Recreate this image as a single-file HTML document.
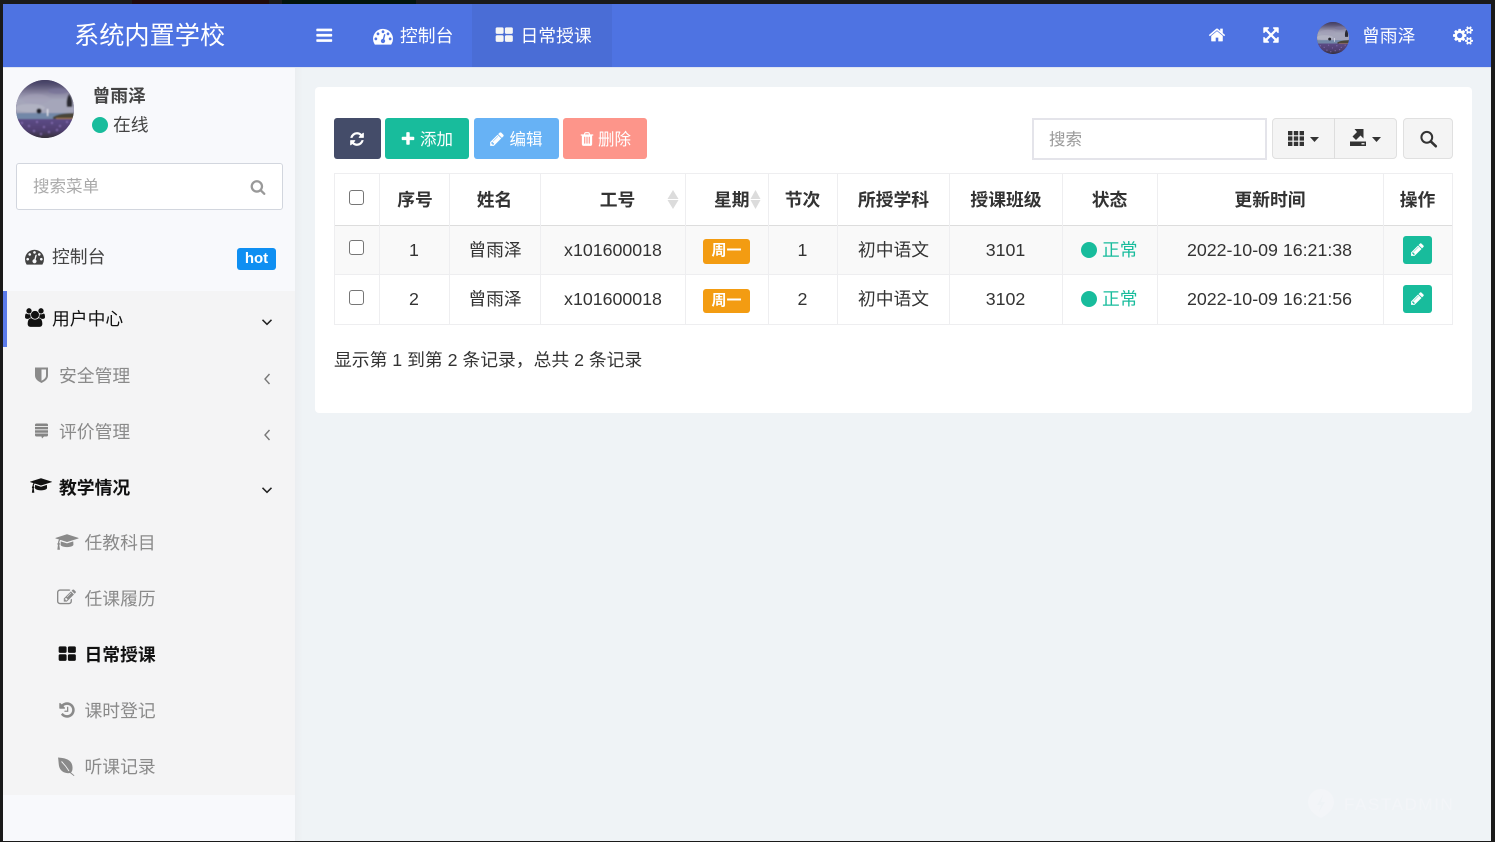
<!DOCTYPE html>
<html lang="zh"><head><meta charset="utf-8"><title>日常授课</title>
<style>
*{box-sizing:border-box}
html,body{margin:0;padding:0;width:1495px;height:842px;overflow:hidden;background:#1a1a1a;font-family:"Liberation Sans","Noto Sans CJK SC",sans-serif;font-size:17.8px;color:#333}
.b{position:absolute}
.t{position:absolute;white-space:nowrap;line-height:24px;height:24px;margin-top:1px}
.c{text-align:center}
svg.i{position:absolute;fill:currentColor;overflow:visible}
.th{font-weight:700;color:#333}
.ln{position:absolute;background:#eeeef0}
.v{top:173px;width:1px;height:152px}
.cb{position:absolute;left:349px;width:15px;height:15px;border:1.5px solid #767676;border-radius:3px;background:#fff}
.bd{position:absolute;left:703px;width:47px;background:#f39c12;border-radius:3px;color:#fff;font-weight:700;font-size:15px;text-align:center;line-height:24px}
.dot{position:absolute;border-radius:50%;background:#18bc9c;width:16px;height:16px}
.eb{position:absolute;left:1403px;width:29px;height:28px;background:#18bc9c;border-radius:3px}
.btn{position:absolute;top:118px;height:41px;border-radius:3px}
.sub{color:#8a8a8a}
</style></head><body>
<svg width="0" height="0" style="position:absolute">
<defs>
<linearGradient id="sky" x1="0" y1="0" x2="0" y2="1"><stop offset="0" stop-color="#38345a"/><stop offset=".2" stop-color="#585374"/><stop offset=".42" stop-color="#8d8aa4"/><stop offset=".58" stop-color="#a5a6ba"/></linearGradient>
<linearGradient id="fld" x1="0" y1="0" x2="0" y2="1"><stop offset="0" stop-color="#5c4a86"/><stop offset=".55" stop-color="#4f3f70"/><stop offset="1" stop-color="#2e2c28"/></linearGradient>
<clipPath id="avc"><circle cx="29" cy="29" r="29"/></clipPath>
<filter id="soft" x="-5%" y="-5%" width="110%" height="110%"><feGaussianBlur stdDeviation=".7"/></filter>
<symbol id="avatar" viewBox="0 0 58 58"><g clip-path="url(#avc)"><rect width="58" height="58" fill="#4f3f70"/><g filter="url(#soft)">
<rect x="-2" y="-2" width="62" height="38" fill="url(#sky)"/>
<ellipse cx="20" cy="19" rx="14" ry="5" fill="#a4a1b8" opacity=".55"/>
<ellipse cx="42" cy="11" rx="10" ry="3" fill="#77739a" opacity=".7"/>
<ellipse cx="14" cy="28" rx="15" ry="4" fill="#b7b8c6" opacity=".7"/>
<rect x="-2" y="33" width="62" height="7" fill="#7288a8"/>
<path d="M37 37c5-3 12-4 23-4v6H37z" fill="#4a4538"/>
<path d="M40 38h20v1.500H40z" fill="#a87a4a"/>
<rect x="31" y="29" width="1.200" height="7" fill="#e8e8f0"/>
<circle cx="23" cy="31" r="2.600" fill="#23222c"/>
<path d="M53 14c3 3 4 8 3 13h-5c-1-5 0-10 2-13z" fill="#2a2a30"/>
<rect x="-2" y="39" width="62" height="21" fill="url(#fld)"/>
<g fill="#8a72b8" opacity=".8"><circle cx="6" cy="43" r="1.100"/><circle cx="13" cy="46" r="1.100"/><circle cx="21" cy="42" r="1.100"/><circle cx="28" cy="47" r="1.100"/><circle cx="36" cy="43" r="1.100"/><circle cx="44" cy="46" r="1.100"/><circle cx="51" cy="42" r="1.100"/><circle cx="18" cy="51" r="1.100"/><circle cx="33" cy="52" r="1.100"/><circle cx="41" cy="50" r="1.100"/><circle cx="25" cy="54" r="1.100"/></g>
</g></g></symbol>
<symbol id="bars" viewBox="0 0 1792 1792"><path d="M1664 1344v128q0 26-19 45t-45 19h-1408q-26 0-45-19t-19-45v-128q0-26 19-45t45-19h1408q26 0 45 19t19 45zm0-512v128q0 26-19 45t-45 19h-1408q-26 0-45-19t-19-45v-128q0-26 19-45t45-19h1408q26 0 45 19t19 45zm0-512v128q0 26-19 45t-45 19h-1408q-26 0-45-19t-19-45v-128q0-26 19-45t45-19h1408q26 0 45 19t19 45z"/></symbol>
<symbol id="home" viewBox="0 0 1792 1792"><path d="M1472 992v480q0 26-19 45t-45 19h-384v-384h-256v384h-384q-26 0-45-19t-19-45v-480q0-1 .5-3t.5-3l575-474 575 474q1 2 1 6zm223-69l-62 74q-8 9-21 11h-3q-13 0-21-7l-692-577-692 577q-12 8-24 7-13-2-21-11l-62-74q-8-10-7-23.5t11-21.5l719-599q32-26 76-26t76 26l244 204v-195q0-14 9-23t23-9h192q14 0 23 9t9 23v408l219 182q10 8 11 21.5t-7 23.5z"/></symbol>
<symbol id="pencil" viewBox="0 0 1792 1792"><path d="M491 1536l91-91-235-235-91 91v107h128v128h107zm523-928q0-22-22-22-10 0-17 7l-542 542q-7 7-7 17 0 22 22 22 10 0 17-7l542-542q7-7 7-17zm-54-192l416 416-832 832h-416v-416zm683 96q0 53-37 90l-166 166-416-416 166-165q36-38 90-38 53 0 91 38l235 234q37 39 37 91z"/></symbol>
<symbol id="plus" viewBox="0 0 1792 1792"><path d="M1600 736v192q0 40-28 68t-68 28h-416v416q0 40-28 68t-68 28h-192q-40 0-68-28t-28-68v-416h-416q-40 0-68-28t-28-68v-192q0-40 28-68t68-28h416v-416q0-40 28-68t68-28h192q40 0 68 28t28 68v416h416q40 0 68 28t28 68z"/></symbol>
<symbol id="search" viewBox="0 0 1792 1792"><path d="M1216 832q0-185-131.500-316.500t-316.500-131.500-316.500 131.500-131.500 316.500 131.500 316.500 316.500 131.500 316.500-131.500 131.500-316.500zm512 832q0 52-38 90t-90 38q-54 0-90-38l-343-342q-179 124-399 124-143 0-273.500-55.500t-225-150-150-225-55.500-273.500 55.500-273.500 150-225 225-150 273.500-55.500 273.500 55.500 225 150 150 225 55.500 273.500q0 220-124 399l343 343q37 37 37 90z"/></symbol>
<symbol id="refresh" viewBox="0 0 1792 1792"><path d="M1639 1056q0 5-1 7-64 268-268 434.500t-478 166.500q-146 0-282.500-55t-243.500-157l-129 129q-19 19-45 19t-45-19-19-45v-448q0-26 19-45t45-19h448q26 0 45 19t19 45-19 45l-137 137q71 66 161 102t187 36q134 0 250-65t186-179q11-17 53-117 8-23 30-23h192q13 0 22.500 9.500t9.500 22.500zm25-800v448q0 26-19 45t-45 19h-448q-26 0-45-19t-19-45 19-45l138-138q-148-137-349-137-134 0-250 65t-186 179q-11 17-53 117-8 23-30 23h-199q-13 0-22.500-9.500t-9.500-22.500v-7q65-268 270-434.500t480-166.500q146 0 284 55.500t245 156.500l130-129q19-19 45-19t45 19 19 45z"/></symbol>
<symbol id="trash" viewBox="0 0 1792 1792"><path d="M704 1376v-704q0-14-9-23t-23-9h-64q-14 0-23 9t-9 23v704q0 14 9 23t23 9h64q14 0 23-9t9-23zm256 0v-704q0-14-9-23t-23-9h-64q-14 0-23 9t-9 23v704q0 14 9 23t23 9h64q14 0 23-9t9-23zm256 0v-704q0-14-9-23t-23-9h-64q-14 0-23 9t-9 23v704q0 14 9 23t23 9h64q14 0 23-9t9-23zm-544-992h448l-48-117q-7-9-17-11h-317q-10 2-17 11zm928 32v64q0 14-9 23t-23 9h-96v948q0 83-47 143.500t-113 60.500h-832q-66 0-113-58.500t-47-141.500v-952h-96q-14 0-23-9t-9-23v-64q0-14 9-23t23-9h309l70-167q15-37 54-63t79-26h320q40 0 79 26t54 63l70 167h309q14 0 23 9t9 23z"/></symbol>
<symbol id="dash" viewBox="0 0 1792 1792"><path fill-rule="evenodd" d="M384 1152q0-53-37.500-90.500t-90.500-37.500-90.500 37.500-37.500 90.500 37.500 90.500 90.500 37.500 90.500-37.500 37.500-90.500zm192-448q0-53-37.500-90.500t-90.500-37.500-90.500 37.500-37.500 90.500 37.500 90.500 90.500 37.500 90.500-37.500 37.500-90.500zm428 481l101-382q6-26-7.500-48.500t-38.500-29.500-48 6.500-30 39.500l-101 382q-60 5-107 43.500t-63 98.500q-20 77 20 146t117 89 146-20 89-117q16-60-6-117t-72-91zm660-33q0-53-37.500-90.500t-90.500-37.500-90.500 37.500-37.500 90.500 37.500 90.500 90.500 37.500 90.500-37.500 37.500-90.500zm-640-640q0-53-37.500-90.500t-90.500-37.500-90.500 37.500-37.500 90.500 37.500 90.500 90.500 37.500 90.500-37.500 37.500-90.500zm448 192q0-53-37.500-90.500t-90.500-37.500-90.500 37.500-37.500 90.500 37.500 90.500 90.500 37.500 90.500-37.500 37.500-90.500zm320 448q0 261-141 483-19 29-54 29h-1402q-35 0-54-29-141-221-141-483 0-182 71-348t191-286 286-191 348-71 348 71 286 191 191 286 71 348z"/></symbol>
<symbol id="users" viewBox="0 0 1920 1792"><path d="M593 896q-162 5-265 128h-134q-82 0-138-40.500t-56-118.500q0-353 124-353 6 0 43.500 21t97.500 42.500 119 21.500q67 0 133-23-5 37-5 66 0 139 81 256zm1071 637q0 120-73 189.500t-194 69.500h-874q-121 0-194-69.500t-73-189.500q0-53 3.500-103.500t14-109 26.500-108.500 43-97.500 62-81 85.500-53.500 111.500-20q10 0 43 21.500t73 48 107 48 135 21.500 135-21.500 107-48 73-48 43-21.500q61 0 111.500 20t85.500 53.500 62 81 43 97.500 26.500 108.500 14 109 3.500 103.500zm-1024-1277q0 106-75 181t-181 75-181-75-75-181 75-181 181-75 181 75 75 181zm704 384q0 159-112.500 271.500t-271.500 112.500-271.500-112.500-112.500-271.500 112.500-271.500 271.500-112.500 271.500 112.500 112.500 271.500zm576 225q0 78-56 118.500t-138 40.500h-134q-103-123-265-128 81-117 81-256 0-29-5-66 66 23 133 23 59 0 119-21.500t97.500-42.500 43.500-21q124 0 124 353zm-128-609q0 106-75 181t-181 75-181-75-75-181 75-181 181-75 181 75 75 181z"/></symbol>
<symbol id="cap" viewBox="0 0 2304 1792"><path d="M1774 836l18 316q4 69-82 128t-235 93.500-323 34.500-323-34.500-235-93.500-82-128l18-316 574 181q22 7 48 7t48-7zm530-324q0 23-22 31l-1120 352q-4 1-10 1t-10-1l-652-206q-43 34-71 111.500t-34 178.500q63 36 63 109 0 69-58 107l58 433q2 14-8 25-9 11-24 11h-192q-15 0-24-11-10-11-8-25l58-433q-58-38-58-107 0-73 65-111 11-207 98-330l-333-104q-22-8-22-31t22-31l1120-352q4-1 10-1t10 1l1120 352q22 8 22 31z"/></symbol>
<symbol id="expand" viewBox="0 0 1792 1792"><path d="M1411 541l-355 355 355 355 144-144q29-31 70-14 39 17 39 59v448q0 26-19 45t-45 19h-448q-42 0-59-40-17-39 14-69l144-144-355-355-355 355 144 144q31 30 14 69-17 40-59 40h-448q-26 0-45-19t-19-45v-448q0-42 40-59 39-17 69 14l144 144 355-355-355-355-144 144q-19 19-45 19-12 0-24-5-40-17-40-59v-448q0-26 19-45t45-19h448q42 0 59 40 17 39-14 69l-144 144 355 355 355-355-144-144q-31-30-14-69 17-40 59-40h448q26 0 45 19t19 45v448q0 42-39 59-13 5-25 5-26 0-45-19z"/></symbol>
<symbol id="edit" viewBox="0 0 1792 1792"><path d="M888 1184l116-116-152-152-116 116v56h96v96h56zm440-720q-16-16-33 1l-350 350q-17 17-1 33t33-1l350-350q17-17 1-33zm80 594v190q0 119-84.500 203.500t-203.500 84.500h-832q-119 0-203.500-84.500t-84.500-203.500v-832q0-119 84.500-203.500t203.500-84.500h832q63 0 117 25 15 7 18 23 3 17-9 29l-49 49q-14 14-32 8-23-6-45-6h-832q-66 0-113 47t-47 113v832q0 66 47 113t113 47h832q66 0 113-47t47-113v-126q0-13 9-22l64-64q15-15 35-7t20 29zm-96-738l288 288-672 672h-288v-288zm444 132l-92 92-288-288 92-92q27-27 68-27t68 27l152 152q27 27 27 68t-27 68z"/></symbol>
<symbol id="history" viewBox="0 0 1792 1792"><path d="M1664 896q0 156-61 298t-164 245-245 164-298 61q-172 0-327-72.500t-264-204.500q-7-10-6.500-22.500t8.500-20.500l137-138q10-9 25-9 16 2 23 12 73 95 179 147t225 52q104 0 198.500-40.500t163.500-109.500 109.500-163.500 40.500-198.500-40.500-198.500-109.500-163.500-163.500-109.500-198.500-40.500q-98 0-188 35.500t-160 101.500l137 138q31 30 14 69-17 40-59 40h-448q-26 0-45-19t-19-45v-448q0-42 40-59 39-17 69 14l130 129q107-101 244.500-156.500t284.500-55.500q156 0 298 61t245 164 164 245 61 298zm-640-288v448q0 14-9 23t-23 9h-320q-14 0-23-9t-9-23v-64q0-14 9-23t23-9h224v-352q0-14 9-23t23-9h64q14 0 23 9t9 23z"/></symbol>
<symbol id="cogs" viewBox="0 0 1920 1792"><path d="M896 896q0-106-75-181t-181-75-181 75-75 181 75 181 181 75 181-75 75-181zm768 512q0-52-38-90t-90-38-90 38-38 90q0 53 37.500 90.500t90.500 37.500 90.500-37.500 37.500-90.500zm0-1024q0-52-38-90t-90-38-90 38-38 90q0 53 37.500 90.500t90.500 37.500 90.500-37.500 37.500-90.500zm-384 421v185q0 10-7 19.500t-16 10.500l-155 24q-11 35-32 76 34 48 90 115 7 11 7 20 0 12-7 19-23 30-82.500 89.500t-78.500 59.500q-11 0-21-7l-115-90q-37 19-77 31-11 108-23 155-7 24-30 24h-186q-11 0-20-7.500t-10-17.500l-23-153q-34-10-75-31l-118 89q-7 7-20 7-11 0-21-8-144-133-144-160 0-9 7-19 10-14 41-53t47-61q-23-44-35-82l-152-24q-10-1-17-9.500t-7-19.500v-185q0-10 7-19.500t16-10.500l155-24q11-35 32-76-34-48-90-115-7-11-7-20 0-12 7-20 22-30 82-89t79-59q11 0 21 7l115 90q34-18 77-32 11-108 23-154 7-24 30-24h186q11 0 20 7.500t10 17.500l23 153q34 10 75 31l118-89q8-7 20-7 11 0 21 8 144 133 144 160 0 8-7 19-12 16-42 54t-45 60q23 48 34 82l152 23q10 2 17 10.500t7 19.500zm640 533v140q0 16-149 31-12 27-30 52 51 113 51 138 0 4-4 7-122 71-124 71-8 0-46-47t-52-68q-20 2-30 2t-30-2q-14 21-52 68t-46 47q-2 0-124-71-4-3-4-7 0-25 51-138-18-25-30-52-149-15-149-31v-140q0-16 149-31 13-29 30-52-51-113-51-138 0-4 4-7 4-2 35-20t59-34 30-16q8 0 46 46.500t52 67.500q20-2 30-2t30 2q51-71 92-112l6-2q4 0 124 70 4 3 4 7 0 25-51 138 17 23 30 52 149 15 149 31zm0-1024v140q0 16-149 31-12 27-30 52 51 113 51 138 0 4-4 7-122 71-124 71-8 0-46-47t-52-68q-20 2-30 2t-30-2q-14 21-52 68t-46 47q-2 0-124-71-4-3-4-7 0-25 51-138-18-25-30-52-149-15-149-31v-140q0-16 149-31 13-29 30-52-51-113-51-138 0-4 4-7 4-2 35-20t59-34 30-16q8 0 46 46.500t52 67.500q20-2 30-2t30 2q51-71 92-112l6-2q4 0 124 70 4 3 4 7 0 25-51 138 17 23 30 52 149 15 149 31z"/></symbol>
<symbol id="thl" viewBox="0 0 1792 1792"><path d="M832 1024v384q0 52-38 90t-90 38h-512q-52 0-90-38t-38-90v-384q0-52 38-90t90-38h512q52 0 90 38t38 90zm0-768v384q0 52-38 90t-90 38h-512q-52 0-90-38t-38-90v-384q0-52 38-90t90-38h512q52 0 90 38t38 90zm896 768v384q0 52-38 90t-90 38h-512q-52 0-90-38t-38-90v-384q0-52 38-90t90-38h512q52 0 90 38t38 90zm0-768v384q0 52-38 90t-90 38h-512q-52 0-90-38t-38-90v-384q0-52 38-90t90-38h512q52 0 90 38t38 90z"/></symbol>
</defs></svg>

<!-- top frame strip -->
<div class="b" style="left:132px;top:0;width:137px;height:4px;background:#1f0a0a"></div>
<div class="b" style="left:282px;top:0;width:134px;height:4px;background:#02140c"></div>

<!-- content bg -->
<div class="b" style="left:3px;top:4px;width:1488px;height:837px;background:#eff3f6"></div>
<!-- header -->
<div class="b" style="left:3px;top:4px;width:1488px;height:63px;background:#4e73e2"></div>
<div class="b" style="left:472px;top:4px;width:140px;height:63px;background:#4a6dd6"></div>
<div class="b" style="left:3px;top:67px;width:1488px;height:1px;background:#dfe5f2"></div>
<div class="t" style="left:74px;top:19px;height:32px;line-height:32px;font-size:25.200px;color:#fff">系统内置学校</div>
<svg class="i" style="left:315px;top:25.500px;color:#fff" width="18.500" height="18.500"><use href="#bars"/></svg>
<svg class="i" style="left:373px;top:26px;color:#fff" width="20" height="20"><use href="#dash"/></svg>
<div class="t" style="left:400px;top:23px;color:#fff">控制台</div>
<svg class="i" style="left:494.500px;top:26px;color:#f5f5f5" width="18.500" height="18.500"><use href="#thl"/></svg>
<div class="t" style="left:520.500px;top:23px;color:#fff">日常授课</div>
<svg class="i" style="left:1208px;top:26px;color:#fff" width="18" height="18"><use href="#home"/></svg>
<svg class="i" style="left:1262px;top:26px;color:#fff" width="18" height="18"><use href="#expand"/></svg>
<svg class="b" style="left:1317px;top:22px" width="32" height="32"><use href="#avatar"/></svg>
<div class="t" style="left:1362px;top:23px;color:#fff">曾雨泽</div>
<svg class="i" style="left:1452.500px;top:26px;color:#fff" width="20" height="19"><use href="#cogs"/></svg>

<!-- sidebar -->
<div class="b" style="left:3px;top:68px;width:292px;height:773px;background:#f8f9fc"></div>
<div class="b" style="left:3px;top:291px;width:292px;height:504px;background:#f4f4f5"></div>
<div class="b" style="left:295px;top:68px;width:8px;height:773px;background:linear-gradient(90deg,#ebeef1,#eff3f6)"></div>
<svg class="b" style="left:16px;top:80px" width="58" height="58"><use href="#avatar"/></svg>
<div class="t" style="left:92.500px;top:83px;font-weight:700;color:#444">曾雨泽</div>
<div class="dot" style="left:92px;top:117px"></div>
<div class="t" style="left:113px;top:112px;color:#444">在线</div>
<div class="b" style="left:16px;top:163px;width:267px;height:47px;background:#fff;border:1px solid #d2d6de;border-radius:3px"></div>
<div class="t" style="left:33px;top:174px;color:#aaa;font-size:16.500px">搜索菜单</div>
<svg class="i" style="left:250px;top:179px;color:#999" width="16" height="16"><use href="#search"/></svg>

<svg class="i" style="left:25px;top:247px;color:#444" width="19" height="19"><use href="#dash"/></svg>
<div class="t" style="left:52px;top:244px;color:#444">控制台</div>
<div class="b" style="left:237px;top:248px;width:39px;height:22px;background:#0f8ff2;border-radius:3px;color:#fff;font-weight:700;font-size:15px;line-height:21px;text-align:center">hot</div>

<div class="b" style="left:3px;top:291px;width:4px;height:56px;background:#5b7bea"></div>
<svg class="i" style="left:25px;top:308px;color:#111" width="20" height="19"><use href="#users"/></svg>
<div class="t" style="left:52px;top:306px;color:#111">用户中心</div>
<svg class="i" style="left:261px;top:318px;fill:none;stroke:#222;stroke-width:1.500" width="12" height="9"><path d="M1.500 1.800L6 6.300 10.500 1.800"/></svg>

<svg class="i" style="left:33px;top:366px" width="17" height="18" viewBox="0 0 17 18"><path fill="#8a8a8a" d="M2 1.500h13v8c0 3.500-3 5.800-6.500 7.500C5 15.300 2 13 2 9.500z"/><path fill="#f4f4f5" d="M8.500 3.500h4.500v6c0 2.400-2 4-4.500 5.300z"/></svg>
<div class="t sub" style="left:59px;top:362.500px">安全管理</div>
<svg class="i" style="left:263px;top:373px;fill:none;stroke:#777;stroke-width:1.400" width="9" height="12"><path d="M6.500 1L2 6 6.500 11"/></svg>

<svg class="i" style="left:33px;top:422px" width="17" height="18" viewBox="0 0 17 18"><path fill="#858585" d="M3.500 1.500h10a1.500 1.500 0 0 1 1.500 1.500v1H2V3a1.500 1.500 0 0 1 1.500-1.500zM2 4.900h13v2.500H2zM2 8.200h13v2.500H2zM2 11.500h13v1.500a1.500 1.500 0 0 1-1.500 1.500H11l-2 2-.5-2h-5A1.500 1.500 0 0 1 2 13z"/></svg>
<div class="t sub" style="left:59px;top:418.500px">评价管理</div>
<svg class="i" style="left:263px;top:429px;fill:none;stroke:#777;stroke-width:1.400" width="9" height="12"><path d="M6.500 1L2 6 6.500 11"/></svg>

<svg class="i" style="left:30px;top:477px;color:#111" width="22" height="17"><use href="#cap"/></svg>
<div class="t" style="left:59px;top:474.500px;font-weight:700;color:#111">教学情况</div>
<svg class="i" style="left:261px;top:486px;fill:none;stroke:#222;stroke-width:1.500" width="12" height="9"><path d="M1.500 1.800L6 6.300 10.500 1.800"/></svg>

<svg class="i" style="left:55px;top:533px;color:#8a8a8a" width="24" height="18"><use href="#cap"/></svg>
<div class="t sub" style="left:84.500px;top:530px">任教科目</div>
<svg class="i" style="left:57px;top:588px;color:#8a8a8a" width="19" height="19"><use href="#edit"/></svg>
<div class="t sub" style="left:84.500px;top:586px">任课履历</div>
<svg class="i" style="left:57.500px;top:645px;color:#111" width="18.500" height="18.500"><use href="#thl"/></svg>
<div class="t" style="left:84.500px;top:642px;font-weight:700;color:#111">日常授课</div>
<svg class="i" style="left:57.500px;top:701px;color:#8a8a8a" width="18" height="18"><use href="#history"/></svg>
<div class="t sub" style="left:84.500px;top:698px">课时登记</div>
<svg class="i" style="left:57px;top:756.500px" width="19" height="19" viewBox="0 0 19 19"><path fill="#8a8a8a" d="M1 .5C9 1 15 3 15.500 10c.2 3-.5 4.500-1.500 5.500l3.500 3-.7.500-3.800-3C8 17 3 14 2 9 1.500 6 1.500 3 1 .5z"/><path fill="none" stroke="#f4f4f5" stroke-width=".9" d="M4.500 4.500C7 7 9.500 10 12 14"/></svg>
<div class="t sub" style="left:84.500px;top:754px">听课记录</div>

<!-- panel -->
<div class="b" style="left:315px;top:87px;width:1157px;height:326px;background:#fff;border-radius:4px"></div>
<div class="btn" style="left:334px;width:47px;background:#444c69"></div>
<svg class="i" style="left:349px;top:131px;color:#fff" width="16" height="16"><use href="#refresh"/></svg>
<div class="btn" style="left:385px;width:84px;background:#18bc9c"></div>
<svg class="i" style="left:400px;top:130.500px;color:#fff" width="16" height="16"><use href="#plus"/></svg>
<div class="t" style="left:420px;top:127px;color:#fff;font-size:16.500px">添加</div>
<div class="btn" style="left:474px;width:85px;background:#67b2f5"></div>
<svg class="i" style="left:489px;top:131px;color:#fff" width="16" height="16"><use href="#pencil"/></svg>
<div class="t" style="left:509.500px;top:127px;color:#fff;font-size:16.500px">编辑</div>
<div class="btn" style="left:563px;width:84px;background:#fd958a"></div>
<svg class="i" style="left:579px;top:131px;color:#fff" width="16" height="16"><use href="#trash"/></svg>
<div class="t" style="left:598px;top:127px;color:#fff;font-size:16.500px">删除</div>

<div class="b" style="left:1032px;top:118px;width:235px;height:42px;background:#fff;border:2px solid #e4e4ea"></div>
<div class="t" style="left:1049px;top:127px;color:#999;font-size:16.500px">搜索</div>
<div class="b" style="left:1272px;top:118px;width:125px;height:41px;background:#f4f4f4;border:1px solid #e0e0e0;border-radius:4px"></div>
<div class="b" style="left:1334px;top:118px;width:1px;height:41px;background:#ddd"></div>
<svg class="i" style="left:1288px;top:131px" width="16" height="15" viewBox="0 0 16 15"><path fill="#333" d="M0 0h4.400v4.200H0zM5.800 0h4.400v4.200H5.800zM11.600 0H16v4.200h-4.400zM0 5.400h4.400v4.200H0zM5.800 5.400h4.400v4.200H5.800zM11.600 5.400H16v4.200h-4.400zM0 10.800h4.400V15H0zM5.800 10.800h4.400V15H5.800zM11.600 10.800H16V15h-4.400z"/></svg>
<svg class="i" style="left:1310px;top:137px" width="9" height="5"><path fill="#333" d="M0 0h9L4.500 5z"/></svg>
<svg class="i" style="left:1350px;top:129px" width="16" height="17" viewBox="0 0 16 17"><path fill="#333" d="M4.500 0h9v9.500l-3-3L6 11 2.500 7.500l4.500-4.500zM0 12.500h16V17H0z"/><path fill="#ddd" d="M11.500 14h3v1.500h-3z"/></svg>
<svg class="i" style="left:1372px;top:137px" width="9" height="5"><path fill="#333" d="M0 0h9L4.500 5z"/></svg>
<div class="b" style="left:1403px;top:118px;width:50px;height:41px;background:#f4f4f4;border:1px solid #e0e0e0;border-radius:4px"></div>
<svg class="i" style="left:1419.500px;top:130.500px;fill:none;stroke:#333" width="17" height="16" viewBox="0 0 17 16"><circle cx="6.800" cy="6.300" r="5.400" stroke-width="2"/><path d="M10.800 10.400l5 4.800" stroke-width="2.600" stroke-linecap="round"/></svg>

<!-- table -->
<div class="b" style="left:334px;top:226px;width:1118px;height:48px;background:#f9f9f9"></div>
<div class="ln" style="left:334px;top:173px;width:1119px;height:1px"></div>
<div class="b" style="left:334px;top:225px;width:1119px;height:1px;background:#ddd"></div>
<div class="ln" style="left:334px;top:274px;width:1119px;height:1px"></div>
<div class="ln" style="left:334px;top:324px;width:1119px;height:1px"></div>
<div class="ln v" style="left:334px"></div>
<div class="ln v" style="left:379px"></div>
<div class="ln v" style="left:449px"></div>
<div class="ln v" style="left:540px"></div>
<div class="ln v" style="left:685px"></div>
<div class="ln v" style="left:768px"></div>
<div class="ln v" style="left:837px"></div>
<div class="ln v" style="left:949px"></div>
<div class="ln v" style="left:1062px"></div>
<div class="ln v" style="left:1157px"></div>
<div class="ln v" style="left:1383px"></div>
<div class="ln v" style="left:1452px"></div>

<div class="cb" style="top:190px"></div>
<div class="t c th" style="left:380px;width:70px;top:187px">序号</div>
<div class="t c th" style="left:449px;width:91px;top:187px">姓名</div>
<div class="t c th" style="left:540px;width:155px;top:187px">工号</div>
<svg class="i" style="left:666.500px;top:190px" width="12" height="19"><path fill="#dcdcdc" d="M6 0l5.500 9H.5zM.5 10h11L6 19z"/></svg>
<div class="t th" style="left:714px;top:187px">星期</div>
<svg class="i" style="left:750px;top:190px" width="11" height="19"><path fill="#dcdcdc" d="M5.500 0l5 9H.5zM.5 10h10l-5 9z"/></svg>
<div class="t c th" style="left:768px;width:69px;top:187px">节次</div>
<div class="t c th" style="left:838px;width:111px;top:187px">所授学科</div>
<div class="t c th" style="left:950px;width:112px;top:187px">授课班级</div>
<div class="t c th" style="left:1062px;width:95px;top:187px">状态</div>
<div class="t c th" style="left:1157px;width:226px;top:187px">更新时间</div>
<div class="t c th" style="left:1383px;width:69px;top:187px">操作</div>

<div class="cb" style="top:240px"></div>
<div class="t c" style="left:379px;width:70px;top:237px">1</div>
<div class="t c" style="left:449px;width:92px;top:237px">曾雨泽</div>
<div class="t c" style="left:540.500px;width:145px;top:237px">x101600018</div>
<div class="bd" style="top:239px;height:25px">周一</div>
<div class="t c" style="left:768px;width:69px;top:237px">1</div>
<div class="t c" style="left:838px;width:111px;top:237px">初中语文</div>
<div class="t c" style="left:950px;width:111px;top:237px">3101</div>
<div class="dot" style="left:1081px;top:242px"></div>
<div class="t" style="left:1102px;top:237px;color:#18bc9c">正常</div>
<div class="t c" style="left:1157px;width:225px;top:237px">2022-10-09 16:21:38</div>
<div class="eb" style="top:236px"></div>
<svg class="i" style="left:1410px;top:242px;color:#fff" width="15" height="15"><use href="#pencil"/></svg>

<div class="cb" style="top:289.500px"></div>
<div class="t c" style="left:379px;width:70px;top:286px">2</div>
<div class="t c" style="left:449px;width:92px;top:286px">曾雨泽</div>
<div class="t c" style="left:540.500px;width:145px;top:286px">x101600018</div>
<div class="bd" style="top:289px;height:24px">周一</div>
<div class="t c" style="left:768px;width:69px;top:286px">2</div>
<div class="t c" style="left:838px;width:111px;top:286px">初中语文</div>
<div class="t c" style="left:950px;width:111px;top:286px">3102</div>
<div class="dot" style="left:1081px;top:291px"></div>
<div class="t" style="left:1102px;top:286px;color:#18bc9c">正常</div>
<div class="t c" style="left:1157px;width:225px;top:286px">2022-10-09 16:21:56</div>
<div class="eb" style="top:285px"></div>
<svg class="i" style="left:1410px;top:291px;color:#fff" width="15" height="15"><use href="#pencil"/></svg>

<div class="t" style="left:334px;top:347px">显示第 1 到第 2 条记录，总共 2 条记录</div>

<!-- watermark -->
<svg class="i" style="left:1308px;top:789px" width="26" height="29" viewBox="0 0 26 29"><path fill="#f3f5f8" d="M13 0c7 0 13 6 13 13 0 7-7 13-13 16C6 26 0 20 0 13 0 6 6 0 13 0z"/><path fill="#eff3f6" d="M15 6l-6 10h4l-2 7 6-10h-4z"/></svg>
<div class="t" style="left:1344px;top:792px;color:#f3f5f8;font-size:17px;letter-spacing:1.600px">FASTADMIN</div>
</body></html>
